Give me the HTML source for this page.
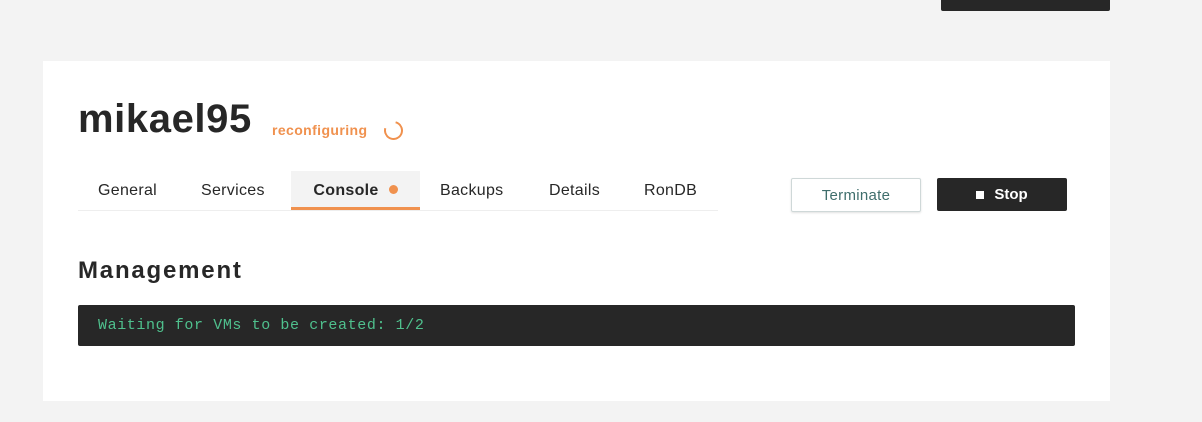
<!DOCTYPE html>
<html><head><style>
body{margin:0;width:1202px;height:422px;background:#f3f3f3;font-family:"Liberation Sans",sans-serif;position:relative;overflow:hidden}
.topbtn{position:absolute;left:941px;top:0;width:169px;height:11px;background:#272727;border-radius:0 0 2px 2px}
.card{position:absolute;left:43px;top:61px;width:1067px;height:340px;background:#fff}
h1{position:absolute;left:35px;top:36px;margin:0;font-size:40px;font-weight:bold;color:#272727;letter-spacing:0.6px}
.st{position:absolute;left:229px;top:61px;font-size:14px;font-weight:bold;color:#f0914e;letter-spacing:0.4px}
.spin{position:absolute;left:341px;top:60px;width:15px;height:15px;border:2px solid #f0914e;border-top-color:transparent;border-radius:50%;transform:rotate(-30deg)}
.tabs{position:absolute;left:35px;top:110px;width:640px;height:39px;border-bottom:1px solid #eee}
.tab{position:absolute;top:0;height:38px;line-height:40px;font-size:16px;color:#272727;letter-spacing:0.3px}
.act{background:#f3f3f3;border-bottom:3px solid #f0914e;height:36px;font-weight:bold;text-align:center}
.dot{display:inline-block;width:9px;height:9px;border-radius:50%;background:#f0914e;margin-left:10px;vertical-align:1px}
.term{position:absolute;left:748px;top:117px;width:128px;height:32px;border:1px solid #cfd8d8;border-radius:2px;box-shadow:0 1px 2px rgba(0,0,0,.12);color:#3f6e6c;font-size:15px;text-align:center;line-height:34px;letter-spacing:0.3px}
.stop{position:absolute;left:894px;top:117px;width:130px;height:33px;background:#272727;border-radius:2px;color:#fff;font-weight:bold;font-size:15px;text-align:center;line-height:34px}
.stop i{display:inline-block;width:8px;height:8px;background:#fff;margin-right:10px}
h2{position:absolute;left:35px;top:196px;margin:0;font-size:24px;font-weight:bold;color:#272727;letter-spacing:1.8px}
.con{position:absolute;left:35px;top:244px;width:997px;height:41px;background:#272727;border-radius:2px;color:#4fc08d;font-family:"Liberation Mono",monospace;font-size:15px;letter-spacing:0.6px;line-height:42px;padding-left:20px;box-sizing:border-box}
</style></head><body>
<div class="topbtn"></div>
<div class="card">
<h1>mikael95</h1>
<div class="st">reconfiguring</div>
<div class="spin"></div>
<div class="tabs">
<div class="tab" style="left:20px">General</div>
<div class="tab" style="left:123px">Services</div>
<div class="tab act" style="left:213px;width:129px">Console<span class="dot"></span></div>
<div class="tab" style="left:362px">Backups</div>
<div class="tab" style="left:471px">Details</div>
<div class="tab" style="left:566px">RonDB</div>
</div>
<div class="term">Terminate</div>
<div class="stop"><i></i>Stop</div>
<h2>Management</h2>
<div class="con">Waiting for VMs to be created: 1/2</div>
</div>
</body></html>
